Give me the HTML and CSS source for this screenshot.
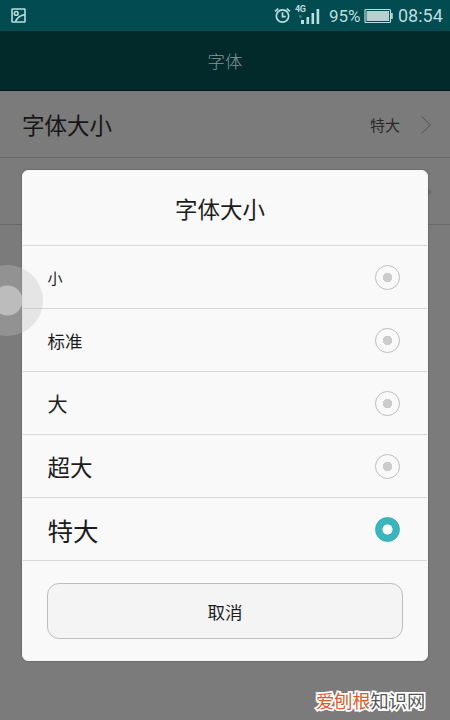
FILE: index.html
```html
<!DOCTYPE html>
<html lang="zh-CN">
<head>
<meta charset="utf-8">
<title>字体</title>
<link rel="stylesheet" href="styles.css">
</head>
<body>
<div class="screen">
  <div class="status">
    <svg class="picture" width="16" height="16" viewBox="0 0 16 16"><rect x="1" y="1" width="13" height="13" rx=".5"/><circle cx="5.2" cy="5.4" r="1.9"/><path d="M4.500 13.500C6 10 9 7.500 14 6.500"/></svg>
    <svg class="alarm" width="17" height="17" viewBox="0 0 16 16"><circle cx="8" cy="8.500" r="5.800"/><path d="M8 5v4h3M1 4.200 4 1.500M15 4.200 12 1.500"/></svg>
    <div class="signal">
      <span class="network">4G</span>
      <svg width="25" height="20" viewBox="0 0 25 20"><path d="M5 15h3v4H5zM10.500 12h2.600v7h-2.600zM15.500 8h2.600v11h-2.600zM20.600 4h2.600v15h-2.600z"/><circle cx="4.500" cy="11.500" r="1.500"/></svg>
    </div>
    <span class="percent">95%</span>
    <svg class="battery" width="30" height="16" viewBox="0 0 30 16"><rect class="case" x="1" y="1.500" width="25.500" height="13" rx="1"/><path d="M2.500 3h22.500v10H2.500zM27 5h1.800v6H27z"/></svg>
    <span class="clock">08:54</span>
  </div>
  <header class="header">字体</header>
  <main>
    <div class="setting">
      <span>字体大小</span><span class="value">特大</span>
      <svg class="chevron" width="12" height="20" viewBox="0 0 12 20"><path d="M1.500 1.500 10.500 10l-9 8.500"/></svg>
    </div>
    <div class="setting">
      <svg class="chevron" width="12" height="20" viewBox="0 0 12 20"><path d="M1.500 1.500 10.500 10l-9 8.500"/></svg>
    </div>
  </main>
  <section class="dialog">
    <h1>字体大小</h1>
    <div class="option small">小<i class="radio"></i></div>
    <div class="option normal">标准<i class="radio"></i></div>
    <div class="option large">大<i class="radio"></i></div>
    <div class="option larger">超大<i class="radio"></i></div>
    <div class="option largest">特大<i class="radio checked"></i></div>
    <button class="cancel">取消</button>
  </section>
  <div class="assist"></div>
  <div class="watermark"><span>爱刨根</span>知识网</div>
</div>
</body>
</html>
```
FILE: styles.css
```css
* { box-sizing: border-box; }
body {
  margin: 0;
  font-family: Roboto, "Noto Sans CJK SC", sans-serif;
}
.screen {
  position: relative;
  width: 450px;
  height: 720px;
  overflow: hidden;
  background: #7b7b7b;
}
.status {
  display: flex;
  align-items: center;
  height: 31px;
  padding: 1px 7px 0 11px;
  background: #024b50;
  color: #b9dedf;
  font-size: 18px;
  line-height: 30px;
}
.status svg { display: block; flex: none; }
.picture, .alarm { fill: none; stroke: #b9dedf; stroke-width: 1.6; }
.alarm { margin: 0 0 1px auto; }
.signal { position: relative; width: 25px; height: 20px; margin: 0 8px 2px 5px; }
.signal svg { fill: #b9dedf; }
.signal circle { fill: #3b7c80; }
.network {
  position: absolute;
  left: -1px;
  top: 0;
  font-size: 9px;
  font-weight: 700;
  line-height: 8px;
  letter-spacing: -.5px;
}
.percent { width: 34px; font-size: 17px; }
.battery { margin: 0 4px 0 1px; fill: #b9cfcf; }
.battery .case { fill: none; stroke: #b9dedf; stroke-width: 1.2; }
.clock { width: 45px; }
.header {
  height: 60px;
  border-bottom: 1px solid #001818;
  background: #032a2b;
  color: #879596;
  font-size: 17.5px;
  font-weight: 300;
  line-height: 62px;
  text-align: center;
}
.setting {
  display: flex;
  align-items: center;
  height: 67px;
  padding: 0 18px 0 22px;
  border-bottom: 1px solid #696969;
  color: #161616;
  font-size: 22.500px;
}
.value { margin-left: auto; font-size: 15px; color: #292929; }
.chevron { margin: 1px 0 0 20px; fill: none; stroke: #555; }
.setting > .chevron:first-child { margin-left: auto; }
.dialog {
  position: absolute;
  left: 22px;
  top: 170px;
  width: 406px;
  height: 491px;
  border: 1px solid #f4f4f4;
  border-radius: 6px;
  background: #f9f9f9;
  color: #1c1c1c;
  box-shadow: 0 0 2px #555;
}
.dialog h1 {
  height: 75px;
  margin: 0;
  padding-right: 10px;
  border-bottom: 1px solid #d8d8d8;
  font-size: 22.500px;
  font-weight: 400;
  line-height: 79px;
  text-align: center;
}
.option {
  display: flex;
  align-items: center;
  justify-content: space-between;
  height: 63px;
  padding: 0 27px 0 24.500px;
  border-bottom: 1px solid #d8d8d8;
}
.small { font-size: 15px; }
.normal { font-size: 17.500px; }
.large { font-size: 20px; }
.larger { font-size: 22.500px; }
.largest { font-size: 25.500px; }
.radio {
  width: 25px;
  height: 25px;
  border: 1px solid #bdbdbd;
  border-radius: 50%;
  background: radial-gradient(circle, #ccc 4.500px, transparent 5px);
}
.checked {
  border-color: #35aeb5;
  background: radial-gradient(circle, #fff 4.800px, #3bb5bc 5.300px);
}
.cancel {
  display: block;
  width: 356px;
  height: 56px;
  margin: 22px 0 0 24px;
  padding: 0;
  border: 1px solid #bebebe;
  border-radius: 12px;
  background: #f4f4f4;
  color: #1c1c1c;
  font: 17.500px Roboto, "Noto Sans CJK SC", sans-serif;
}
.assist {
  position: absolute;
  left: -28px;
  top: 265px;
  width: 71px;
  height: 71px;
  border-radius: 50%;
  background: radial-gradient(circle, rgba(205, 205, 205, .8) 14.500px, rgba(190, 190, 190, .34) 15.500px);
}
.watermark {
  position: absolute;
  left: 316px;
  top: 688px;
  color: #555;
  font-size: 18.200px;
  line-height: 28px;
  white-space: nowrap;
  -webkit-text-stroke: 3.500px #fff;
  paint-order: stroke fill;
}
.watermark span { color: #d9602b; }
```
